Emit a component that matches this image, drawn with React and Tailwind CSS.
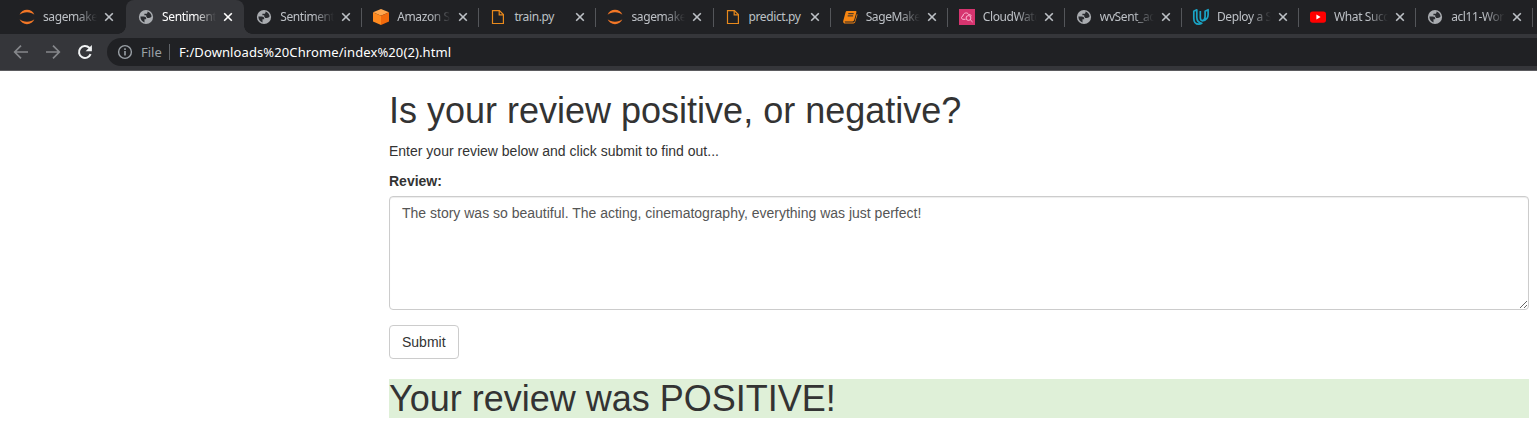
import React from "react";

function Jupyter() {
  return (
    <svg width="16" height="16" viewBox="0 0 16 16" fill="#f37726">
      <path d="M0.6 5.7C1.8 2.7 4.7.8 8 .8s6.200 1.900 7.400 4.900C13.600 4.100 11 3.200 8 3.200S2.400 4.100.6 5.700z" />
      <path d="M0.6 10.300C1.800 13.300 4.700 15.200 8 15.200s6.200-1.900 7.400-4.900c-1.800 1.600-4.400 2.500-7.400 2.500S2.400 11.900.6 10.300z" />
    </svg>
  );
}

function Globe() {
  return (
    <svg width="16" height="16" viewBox="0 0 16 16">
      <circle cx="8" cy="8" r="7.100" fill="#a9acb0" />
      <path
        d="M2.400 7.600h3.500c1.400 0 2.300.8 2.300 2v.7H6.500v3.100C4 12.700 2.300 10.500 2.400 7.600z M9.500 2.500c2.200.6 3.800 2.500 4.100 4.800-.6 1.200-1.500 1.700-2.600 1.700H9.300L8.200 7.600V6.300H6.400V4.800h1.800c.9 0 1.500-.9 1.300-2.300z"
        fill="#292b2f"
      />
    </svg>
  );
}

function Box() {
  return (
    <svg width="18" height="18" viewBox="0 0 18 18">
      <path d="M9 1l8 3.200-8 3.500-8-3.500z" fill="#ffa64d" />
      <path d="M1 4.200l8 3.500V17l-8-3.400z" fill="#ff8a1f" />
      <path d="M17 4.200L9 7.700V17l8-3.400z" fill="#f26a0c" />
    </svg>
  );
}

function FileIcon() {
  return (
    <svg width="16" height="16" viewBox="0 0 16 16" fill="none" stroke="#e8891c" strokeWidth="1.2">
      <path d="M2.500 1.600h6.900l4 4v8.900H2.500z" />
      <path d="M9.200 1.600v4.300h4.300" />
    </svg>
  );
}

function Book() {
  return (
    <svg width="16" height="16" viewBox="0 0 16 16">
      <path d="M5.300 2h8.200c.7 0 1.100.5.900 1.200l-2.300 8.100c-.2.700-.8 1.100-1.500 1.100H3.200c-.5 0-.7.500-.3.800.2.200.5.300.8.300h7.500c.8 0 1.300-.4 1.500-1.100l2.200-7.600c.5.300.6.800.4 1.400l-2.200 7.100c-.2.700-.9 1.200-1.600 1.200H3.300c-1.500 0-2.500-1.300-2.100-2.600L3.500 3.400C3.800 2.500 4.400 2 5.300 2z" fill="#f58512" />
      <path d="M6.300 4.700h5.400M5.700 6.900h5.400" stroke="#292b2f" strokeWidth="1" />
    </svg>
  );
}

function CloudWatch() {
  return (
    <svg width="16" height="16" viewBox="0 0 16 16">
      <rect width="16" height="16" fill="#d6346f" />
      <g fill="none" stroke="#ffc4dc" strokeWidth="0.9">
        <path d="M6.500 10.300H3.800C2 9.800 2 7.400 4 7c-.1-3.200 4.600-4.300 5.700-1.300 1.700-.6 2.500.5 2.400 1.500" />
        <circle cx="9.500" cy="9" r="2.400" />
        <path d="M11.200 10.700l2.400 2.300" />
      </g>
    </svg>
  );
}

function Udacity() {
  return (
    <svg width="18" height="18" viewBox="0 0 18 18" fill="none" stroke="#1aa3c4" strokeWidth="1.700" strokeLinejoin="round">
      <path d="M4.800 1.800L1.800 3.300v7.200c0 3.400 2 5.700 5 5.700 1 0 2-.3 3-.9-3.200-.5-5-2.600-5-6V1.800z" />
      <path d="M8.300 3v6.500c0 2 .8 3 1.900 3.300 2.800-.4 5.900-2.300 5.900-6.100V1.700l-3 1.500v5.200c0 2.300-1.300 3.800-2.900 4.400" />
    </svg>
  );
}

function YouTube() {
  return (
    <svg width="16" height="16" viewBox="0 0 16 16">
      <rect x="0" y="2.400" width="16" height="11.300" rx="2.600" fill="#f00" />
      <path d="M6.400 5.600v4.800L10.600 8z" fill="#fff" />
    </svg>
  );
}

function Close() {
  return (
    <svg className="shrink-0" width="10" height="10" viewBox="0 0 10 10" stroke="currentColor" strokeWidth="1.600">
      <path d="M1.200 1.200l7.600 7.600M8.800 1.200L1.200 8.800" />
    </svg>
  );
}

const FADE = "[mask-image:linear-gradient(to_right,#000_62%,transparent)]";

const tabs = [
  { title: "sagemaker", Icon: Jupyter, shape: "w-[117.1px] pl-[8px]" },
  { title: "Sentiment A", Icon: Globe, active: true, shape: "-ml-[2px] w-[118.1px] pl-[12px] mr-px" },
  { title: "Sentiment A", Icon: Globe },
  { title: "Amazon Sa", Icon: Box },
  { title: "train.py", Icon: FileIcon, short: true },
  { title: "sagemaker", Icon: Jupyter },
  { title: "predict.py", Icon: FileIcon, short: true },
  { title: "SageMaker", Icon: Book },
  { title: "CloudWatc", Icon: CloudWatch },
  { title: "wvSent_acl", Icon: Globe },
  { title: "Deploy a Se", Icon: Udacity },
  { title: "What Succ", Icon: YouTube },
  { title: "acl11-Wor", Icon: Globe },
];

function Tab({ title, Icon, active, divider, short, shape = "w-[117.1px] pl-[11px]" }) {
  return (
    <div
      className={
        "relative flex h-[34px] shrink-0 items-center " +
        shape +
        (active ? " rounded-t-lg bg-[#35363a] text-white" : " text-[#bdc1c6]")
      }
    >
      {active && (
        <>
          <span className="absolute bottom-0 -left-2 size-2 bg-[radial-gradient(circle_at_0_0,transparent_7.5px,#35363a_8px)]" />
          <span className="absolute -right-2 bottom-0 size-2 bg-[radial-gradient(circle_at_100%_0,transparent_7.5px,#35363a_8px)]" />
        </>
      )}
      <span className="flex size-4 shrink-0 items-center justify-center [&>svg]:shrink-0">
        <Icon />
      </span>
      <span
        className={
          "ml-[8px] w-[54px] shrink-0 overflow-hidden text-[12px] leading-4 tracking-[-0.4px] whitespace-nowrap " +
          (short ? "" : FADE)
        }
      >
        {title}
      </span>
      <span className="ml-[7px] flex">
        <Close />
      </span>
      {divider && <span className="absolute top-2 right-0 h-[19px] w-px bg-[#54565a]" />}
    </div>
  );
}

export default function App() {
  return (
    <div className="h-[439px] w-full overflow-hidden bg-white font-['Liberation_Sans',Arial,sans-serif] text-[14px] leading-5 text-[#333]">
      <header className="font-['Noto_Sans','Open_Sans',sans-serif]">
        <div className="flex h-[34px] overflow-hidden bg-[#202124] pl-[11px]">
          {tabs.map((tab, i) => (
            <Tab key={i} {...tab} divider={i > 1} />
          ))}
        </div>
        <div className="flex h-[37px] items-center overflow-hidden border-b border-[#5b5b5f] bg-[#35363a]">
          <div className="flex w-[107px] shrink-0 items-center gap-4 pl-[13px]">
            <svg width="16" height="16" viewBox="0 0 16 16" fill="none" stroke="#85878b" strokeWidth="1.700">
              <path d="M15 8H2M8 1.700L1.700 8 8 14.300" />
            </svg>
            <svg width="16" height="16" viewBox="0 0 16 16" fill="none" stroke="#85878b" strokeWidth="1.700">
              <path d="M1 8h13M8 1.700L14.300 8 8 14.300" />
            </svg>
            <svg width="16" height="16" viewBox="0 0 16 16" fill="none" stroke="#f1f3f4" strokeWidth="2">
              <path d="M13.600 10.200A6 6 0 1 1 12.300 3.800L14 5.500" />
              <path d="M14.900 1v6.300H8.600z" fill="#f1f3f4" stroke="none" />
            </svg>
          </div>
          <div className="flex h-7 flex-1 items-center rounded-l-full bg-[#202124] pl-[10px] text-[13px]">
            <svg width="16" height="16" viewBox="0 0 16 16" fill="none" stroke="#9aa0a6" strokeWidth="1.400">
              <circle cx="8" cy="8" r="6.400" />
              <path d="M8 7v4.500M8 4.300v1.600" strokeWidth="1.600" />
            </svg>
            <span className="ml-2 w-[21px] text-[#9aa0a6]">File</span>
            <span className="ml-[7px] h-4 w-px bg-[#5f6368]" />
            <span className="ml-[9px] tracking-[0.1px] whitespace-nowrap text-white">
              F:/Downloads%20Chrome/index%20(2).html
            </span>
          </div>
        </div>
      </header>
      <main className="pt-5 pr-2 pl-[389px]">
        <h1 className="mb-[10px] text-[36px] leading-[39.600px] font-normal">Is your review positive, or negative?</h1>
        <p className="mb-[10px]">Enter your review below and click submit to find out...</p>
        <form onSubmit={(e) => e.preventDefault()}>
          <label htmlFor="review" className="mb-[5px] block font-bold">
            Review:
          </label>
          <textarea
            id="review"
            className="mb-[15px] block h-[114px] w-full resize-y rounded border border-[#ccc] bg-white px-3 py-[6px] text-[#555] shadow-[inset_0_1px_1px_rgba(0,0,0,0.075)] outline-none"
            defaultValue="The story was so beautiful. The acting, cinematography, everything was just perfect!"
          />
          <button type="submit" className="block h-[34px] rounded border border-[#ccc] bg-white px-3 text-[#333]">
            Submit
          </button>
        </form>
        <h1 className="mt-5 bg-[#dff0d8] text-[36px] leading-[39.600px] font-normal">Your review was POSITIVE!</h1>
      </main>
    </div>
  );
}
